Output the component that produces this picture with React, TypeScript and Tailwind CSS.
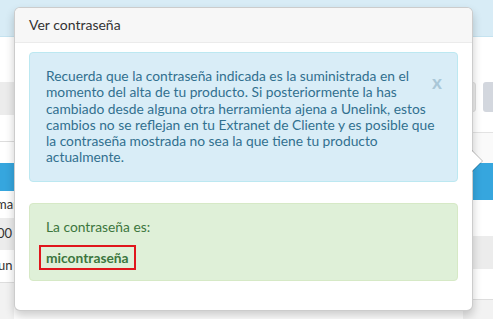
import React from 'react';

const font = { fontFamily: 'Lato, "Open Sans", sans-serif' };

function Background() {
  return (
    <div className="w-[493px] h-[319px] bg-white overflow-hidden text-[13px] text-[#333]">
      <div className="h-[37px] bg-[#d8ecf6] border-b border-[#c5e3f0]" />
      <div className="flex justify-between">
        {/* left strip */}
        <div className="w-[14px] overflow-hidden flex flex-col">
          <div className="h-[45px]" />
          <div className="h-[33px] bg-[#ececec]" />
          <div className="h-[27px] border-b border-[#dddddd]" />
          <div className="h-[21px]" />
          <div className="h-[28px] bg-[#36a6de]" />
          <div className="h-[27px] flex items-center whitespace-nowrap -ml-[4px]">mar</div>
          <div className="h-[32px] bg-[#ececec] flex items-center whitespace-nowrap -ml-[3px]">00</div>
          <div className="h-[33px] border-b border-[#dddddd] flex items-center whitespace-nowrap -ml-[2px]">un</div>
          <div className="h-[40px] bg-[#f2f2f2]" />
        </div>
        {/* right strip */}
        <div className="w-[30px] flex flex-col">
          <div className="h-[45px]" />
          <div className="h-[30px] flex gap-[7px]">
            <div className="w-[13px] bg-[#ececec] border border-[#dedede] rounded-r-[3px]" />
            <div className="flex-1 bg-[#d3d7de] rounded-l-[3px]" />
          </div>
          <div className="h-[20px]" />
          <div className="h-[31px] border-t border-[#e3e3e3] bg-[#fafafa]" />
          <div className="h-[37px] bg-[#36a6de]" />
          <div className="h-[36px]" />
          <div className="h-[33px] bg-[#ececec]" />
          <div className="h-[31px] border-b border-[#dddddd]" />
          <div className="h-[20px] bg-[#f2f2f2]" />
        </div>
      </div>
    </div>
  );
}

export default function App() {
  return (
    <div className="relative w-[493px] h-[319px]" style={font}>
      <Background />
      <div className="absolute left-[14px] top-[7px] w-[459px] bg-white border border-[rgba(0,0,0,0.2)] rounded-[6px] shadow-[0_5px_10px_rgba(0,0,0,0.2)]">
        {/* arrow */}
        <div className="absolute -right-[11px] top-[142px] w-0 h-0 border-y-[11px] border-y-transparent border-l-[11px] border-l-[rgba(0,0,0,0.25)]" />
        <div className="absolute -right-[10px] top-[143px] w-0 h-0 border-y-[10px] border-y-transparent border-l-[10px] border-l-white" />

        <div className="px-[14px] py-[8px] text-[14px] leading-[18px] text-[#333] bg-[#f7f7f7] border-b border-[#ebebeb] rounded-t-[5px]">
          Ver contraseña
        </div>
        <div className="px-[14px] py-[9px]">
          <div className="mb-[21px] pl-[16px] pr-[20px] py-[15px] bg-[#d9edf7] border border-[#bce8f1] rounded-[4px] text-[13.8px] leading-[16.25px] text-[#31708f]">
            <span className="float-right relative top-[4px] -mr-[5px] text-[19px] leading-none font-bold text-[#a9c7d7]">x</span>
            Recuerda que la contraseña indicada es la suministrada en el momento del alta de tu producto. Si posteriormente la has cambiado desde alguna otra herramienta ajena a Unelink, estos cambios no se reflejan en tu Extranet de Cliente y es posible que la contraseña mostrada no sea la que tiene tu producto actualmente.
          </div>
          <div className="mb-[20px] pl-[16px] pr-[15px] pt-[15px] pb-[14px] bg-[#dff0d8] border border-[#d6e9c6] rounded-[4px] text-[13.8px] leading-[16px] text-[#3c763d]">
            <p className="mb-[15px]">La contraseña es:</p>
            <p>
              <span className="relative font-bold">
                micontraseña
                <span className="absolute -left-[7px] -top-[4px] w-[97px] h-[25px] border-2 border-[#e0161c]" />
              </span>
            </p>
          </div>
        </div>
      </div>
    </div>
  );
}
